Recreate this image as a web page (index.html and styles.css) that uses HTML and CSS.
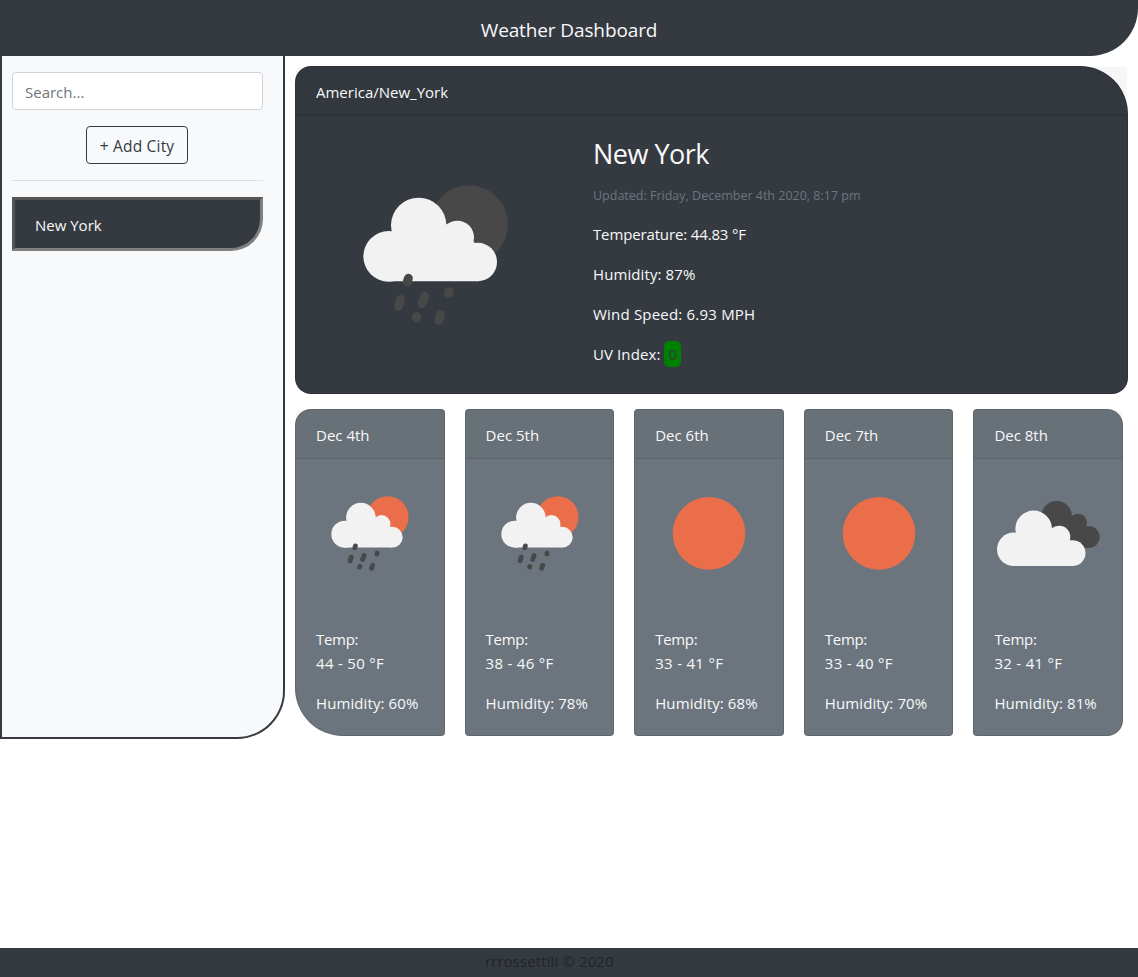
FILE: index.html
```html
<!DOCTYPE html>
<html lang="en">
<head>
<meta charset="utf-8">
<title>Weather Dashboard</title>
<link rel="stylesheet" href="styles.css">
</head>
<body>
<svg class="defs" aria-hidden="true">
  <defs>
    <g id="cloud">
      <circle cx="146" cy="259" r="76"/>
      <circle cx="236" cy="166" r="83"/>
      <circle cx="352" cy="202" r="50"/>
      <circle cx="413" cy="276" r="58"/>
      <path d="M146 200L236 160H317L352 200L402 215L413 240V334H146Z"/>
    </g>
    <g id="rain" stroke="#484849" stroke-width="27" stroke-linecap="round">
      <path d="M205 325L202 336M182 388L175 409M254 379L246 401M327 365L326 370M230 440L229 444M302 434L296 451"/>
    </g>
    <g id="shower">
      <circle cx="387" cy="163" r="117"/>
      <use href="#cloud" fill="#f2f2f2"/>
      <use href="#rain"/>
    </g>
    <g id="shower-small" transform="translate(8.6 27.2) scale(.534)">
      <use href="#shower" fill="#eb6e4b"/>
    </g>
  </defs>
</svg>
<header class="topbar"><h1 class="title">Weather Dashboard</h1></header>
<div class="layout">
  <aside class="sidebar">
    <input class="search" type="text" placeholder="Search...">
    <button class="add">+ Add City</button>
    <hr class="rule">
    <button class="city">New York</button>
  </aside>
  <main class="content">
    <section class="card current">
      <div class="card-header"><span class="zone">America/New_York</span></div>
      <div class="current-body">
        <svg class="current-icon" viewBox="0 0 570 510"><use href="#shower" fill="#484849"/></svg>
        <div class="details">
          <h2 class="name">New York</h2>
          <p class="updated">Updated: Friday, December 4th 2020, 8:17 pm</p>
          <p class="temperature">Temperature: 44.83 °F</p>
          <p class="humidity">Humidity: 87%</p>
          <p class="wind">Wind Speed: 6.93 MPH</p>
          <p class="index">UV Index: <span class="uv">0</span></p>
        </div>
      </div>
    </section>
    <section class="forecast">
      <article class="card day first">
        <div class="card-header">Dec 4th</div>
        <div class="day-body">
          <svg class="day-icon" viewBox="0 0 324 324"><use href="#shower-small"/></svg>
          <p class="range">Temp:<br><span>44 - 50 °F</span></p><p>Humidity: 60%</p>
        </div>
      </article>
      <article class="card day">
        <div class="card-header">Dec 5th</div>
        <div class="day-body">
          <svg class="day-icon" viewBox="0 0 324 324"><use href="#shower-small"/></svg>
          <p class="range">Temp:<br><span>38 - 46 °F</span></p><p>Humidity: 78%</p>
        </div>
      </article>
      <article class="card day">
        <div class="card-header">Dec 6th</div>
        <div class="day-body">
          <svg class="day-icon" viewBox="0 0 324 324"><circle cx="162" cy="163" r="109" fill="#eb6e4b"/></svg>
          <p class="range">Temp:<br><span>33 - 41 °F</span></p><p>Humidity: 68%</p>
        </div>
      </article>
      <article class="card day">
        <div class="card-header">Dec 7th</div>
        <div class="day-body">
          <svg class="day-icon" viewBox="0 0 324 324"><circle cx="162" cy="163" r="109" fill="#eb6e4b"/></svg>
          <p class="range">Temp:<br><span>33 - 40 °F</span></p><p>Humidity: 70%</p>
        </div>
      </article>
      <article class="card day last">
        <div class="card-header">Dec 8th</div>
        <div class="day-body">
          <svg class="day-icon" viewBox="0 0 324 324">
            <g fill="#484849"><circle cx="188" cy="112" r="46"/><circle cx="252" cy="131" r="27"/><circle cx="284" cy="174" r="33"/><path d="M188 112H230L252 131L284 150V207H188Z"/></g>
            <use href="#cloud" fill="#f2f2f2" transform="translate(-37.3 39.6) scale(.662)"/>
          </svg>
          <p class="range">Temp:<br><span>32 - 41 °F</span></p><p>Humidity: 81%</p>
        </div>
      </article>
    </section>
  </main>
</div>
<footer class="footer"><span>rrrossettiii © 2020</span></footer>
</body>
</html>
```
FILE: styles.css
```css
* { box-sizing: border-box; }
body {
  margin: 0;
  height: 977px;
  display: flex;
  flex-direction: column;
  background: #fff;
  color: #212529;
  font-family: "Segoe UI", "Open Sans", "Noto Sans", sans-serif;
  font-size: 15px;
  line-height: 24px;
  overflow: hidden;
}
.defs { position: absolute; width: 0; height: 0; }
p, h1, h2 { margin: 0; font-weight: 400; }
.topbar {
  height: 56px;
  flex: none;
  background: #353a41;
  border-bottom-right-radius: 48px;
  text-align: center;
  padding-top: 15px;
}
.title { color: #f8f9fa; font-size: 19px; line-height: 30px; letter-spacing: -.12px; }
.layout { flex: 1; display: flex; align-items: flex-start; }
.sidebar {
  width: 285px;
  height: 683px;
  flex: none;
  display: flex;
  flex-direction: column;
  padding: 16px 20px 0 10px;
  background: #f8f9fb;
  border: 2px solid #353a41;
  border-top: 0;
  border-bottom-right-radius: 48px;
}
.search {
  width: 100%;
  height: 38px;
  padding: 1px 12px 0;
  border: 1px solid #ced4da;
  border-radius: 4px;
  background: #fff;
  font: inherit;
}
.search::placeholder { color: #6c757d; opacity: 1; }
.add {
  width: 102px;
  height: 38px;
  margin: 16px 0 0 74px;
  padding: 2px 0 0;
  border: 1px solid #353a41;
  border-radius: 4px;
  background: transparent;
  color: #353a41;
  font: inherit;
  font-size: 15.5px;
  letter-spacing: .2px;
  white-space: nowrap;
}
.rule { width: 100%; height: 1px; margin: 16px 0; border: 0; background: #dedfe1; }
.city {
  height: 54px;
  padding: 1px 20px 0;
  border: 3px solid;
  border-color: #555 #808080 #808080 #555;
  border-bottom-right-radius: 32px;
  background: #353a41;
  color: #f8f9fa;
  font: inherit;
  text-align: left;
}
.content { flex: 1; min-width: 0; padding: 10px 10px 0; }
.card { border: 1px solid rgba(0, 0, 0, .125); color: #f8f9fa; }
.card-header {
  height: 49px;
  padding: 13px 20px 0;
  border-bottom: 1px solid rgba(0, 0, 0, .125);
  border-radius: 3px 3px 0 0;
  background: rgba(0, 0, 0, .035);
  white-space: nowrap;
}
.current { height: 328px; background: #353a41; border-radius: 16px 48px 16px 16px; }
.current-body { display: flex; }
.current-icon { width: 190px; height: 170px; margin: 54px 63px 0 44px; flex: none; }
.details { padding-top: 19px; display: flex; flex-direction: column; gap: 16px; }
.name { font-size: 27px; line-height: 38px; margin-bottom: -5px; letter-spacing: -.5px; }
.updated { font-size: 12.5px; color: #6c757d; margin-bottom: -2px; }
.temperature { letter-spacing: -.14px; }
.humidity { letter-spacing: .1px; }
.wind { letter-spacing: .2px; }
.index { line-height: 26px; margin-top: -1px; letter-spacing: .1px; }
.uv { display: inline-block; width: 17px; border-radius: 5px; background: green; color: #353a41; text-align: center; }
.forecast { display: grid; grid-template-columns: repeat(5, minmax(0, 1fr)); gap: 20px; margin-top: 15px; padding-right: 5px; }
.day { height: 327px; background: #6c757d; border-radius: 4px; white-space: nowrap; }
.first { border-radius: 16px 4px 4px 48px; }
.last { border-radius: 4px 16px 16px 4px; }
.day-body { padding: 20px 20px 0; }
.day-icon { display: block; width: 108px; height: 108px; margin-bottom: 40px; }
.day-body p { margin-bottom: 16px; letter-spacing: .1px; }
.day-body .range { letter-spacing: -.3px; }
.range span { letter-spacing: .3px; }
.footer { height: 29px; flex: none; padding: 1px 0 0 485px; background: #353a41; letter-spacing: .1px; }
```
